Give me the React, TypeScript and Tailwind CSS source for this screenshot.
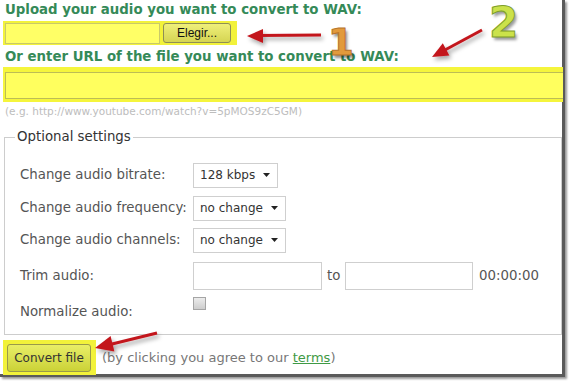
import React from 'react';

const GREEN = 'text-[#358a58]';

const SETTINGS_ROWS = [
  { label: 'Change audio bitrate:', value: '128 kbps', width: 'w-[85px]', mt: 'mt-0' },
  { label: 'Change audio frequency:', value: 'no change', width: 'w-[93px]', mt: 'mt-[5px]' },
  { label: 'Change audio channels:', value: 'no change', width: 'w-[93px]', mt: 'mt-[4px]' },
];

function FakeSelect({ value, width }: { value: string; width: string }) {
  return (
    <div className={`${width} h-[25px] flex items-center justify-between border border-[#cfcfcf] bg-white pl-[6px] pr-[7px] text-[12px] text-[#333]`}>
      <span>{value}</span>
      <svg width="7" height="4" viewBox="0 0 7 4">
        <path d="M0 0h7L3.5 4z" fill="#222" />
      </svg>
    </div>
  );
}

function Arrows() {
  return (
    <svg className="absolute left-0 top-0 pointer-events-none" width="570" height="381" viewBox="0 0 570 381">
      <defs>
        <filter id="sh" x="-20%" y="-50%" width="140%" height="200%">
          <feDropShadow dx="2" dy="3" stdDeviation="2" floodColor="#000" floodOpacity="0.35" />
        </filter>
      </defs>
      <g fill="#c3161d" stroke="#c3161d" filter="url(#sh)">
        {/* arrow 1 */}
        <line x1="258" y1="35.5" x2="321" y2="35" strokeWidth="3" />
        <polygon points="247,36 263,29 263,43" stroke="none" />
        {/* arrow 2 */}
        <line x1="482" y1="30" x2="444" y2="50.5" strokeWidth="3" />
        <polygon points="432,57 449.4,55.6 442.8,43.2" stroke="none" />
        {/* arrow 3 */}
        <line x1="157" y1="333" x2="110" y2="344.5" strokeWidth="3" />
        <polygon points="95,348 114.4,351.6 110.6,336" stroke="none" />
      </g>
    </svg>
  );
}

export default function App() {
  return (
    <div className="relative w-[570px] h-[381px] overflow-hidden bg-white font-['DejaVu_Sans',sans-serif]">
      <div className="w-[565px] h-[377px] bg-white border-r-[3px] border-b-[3px] border-[#5a5a5a] shadow-[2px_2px_2px_rgba(0,0,0,0.4)]">
        <h2 className={`pl-[5px] pt-[2px] text-[13.33px] leading-[16px] font-bold ${GREEN}`}>
          Upload your audio you want to convert to WAV:
        </h2>

        <div className="mt-[3px] ml-[3px] w-[234px] h-[24px] flex items-center gap-[3px] bg-[#f2f23a] pl-[2px]">
          <div className="w-[155px] h-[21px] border border-[#c9c96a] bg-[#ffff66]" />
          <button className="w-[68px] h-[20px] rounded-[3px] border border-[#8f8f55] bg-gradient-to-b from-[#efef7a] to-[#d5d552] font-['Liberation_Sans',sans-serif] text-[12px] text-[#111]">
            Elegir...
          </button>
        </div>

        <h2 className={`mt-[4px] pl-[5px] text-[13.33px] leading-[16px] font-bold ${GREEN}`}>
          Or enter URL of the file you want to convert to WAV:
        </h2>

        <div className="mt-[2px] ml-[3px] w-[560px] h-[35px] bg-[#f5f53c] pt-[5px] pl-[2px]">
          <div className="w-full h-[27px] border-t border-l border-b border-[#bdbd55] bg-[#ffff5e]" />
        </div>

        <p className="mt-[3px] pl-[5px] text-[10.5px] leading-[13px] text-[#bdbdbd]">
          (e.g. http://www.youtube.com/watch?v=5pMOS9zC5GM)
        </p>

        <fieldset className="mt-[11px] ml-[4px] w-[558px] border border-[#cdcdcd] pl-[15px] pt-[16px] pb-[14px]">
          <legend className="ml-[-5px] px-[2px] text-[13.33px] leading-[16px] text-[#333]">Optional settings</legend>

          {SETTINGS_ROWS.map((row) => (
            <div key={row.label} className={`${row.mt} h-[28px] flex items-center`}>
              <span className="w-[173px] text-[13.33px] text-[#555]">{row.label}</span>
              <FakeSelect value={row.value} width={row.width} />
            </div>
          ))}

          <div className="mt-[8px] h-[28px] flex items-center text-[13.33px] text-[#555]">
            <span className="w-[173px]">Trim audio:</span>
            <div className="w-[129px] h-[28px] border border-[#cfcfcf] bg-white" />
            <span className="w-[23px] pl-[5px]">to</span>
            <div className="w-[128px] h-[28px] border border-[#cfcfcf] bg-white" />
            <span className="pl-[6px]">00:00:00</span>
          </div>

          <div className="mt-[6px] h-[24px] flex text-[13.33px] text-[#555]">
            <span className="w-[173px] self-end leading-[16px]">Normalize audio:</span>
            <div className="mt-[1px] w-[13px] h-[13px] border border-[#a5a5a5] bg-gradient-to-b from-[#ececec] to-[#cdcdcd]" />
          </div>
        </fieldset>

        <div className="mt-[5px] flex items-center">
          <div className="ml-[3px] w-[93px] h-[35px] flex items-center bg-[#f2f23a] pl-[4px]">
            <button className="w-[84px] h-[28px] rounded-[3px] border border-[#9a9a4a] bg-gradient-to-b from-[#e9ee66] to-[#cbd236] text-[12px] text-[#333]">
              Convert file
            </button>
          </div>
          <span className="ml-[6px] text-[13px] text-[#777]">
            (by clicking you agree to our <span className="text-[#3f9a45] underline">terms</span>)
          </span>
        </div>
      </div>

      <Arrows />

      <span className="absolute left-[328px] top-[24px] text-[37px] leading-[37px] font-bold text-[#e29a3c] [-webkit-text-stroke:1px_#b8742a] [text-shadow:2px_3px_3px_rgba(0,0,0,0.45)]">
        1
      </span>
      <span className="absolute left-[489px] top-[0px] text-[42px] leading-[46px] font-bold text-[#cbe24a] [-webkit-text-stroke:1px_#7fa02a] [text-shadow:2px_3px_3px_rgba(0,0,0,0.4)]">
        2
      </span>
    </div>
  );
}
